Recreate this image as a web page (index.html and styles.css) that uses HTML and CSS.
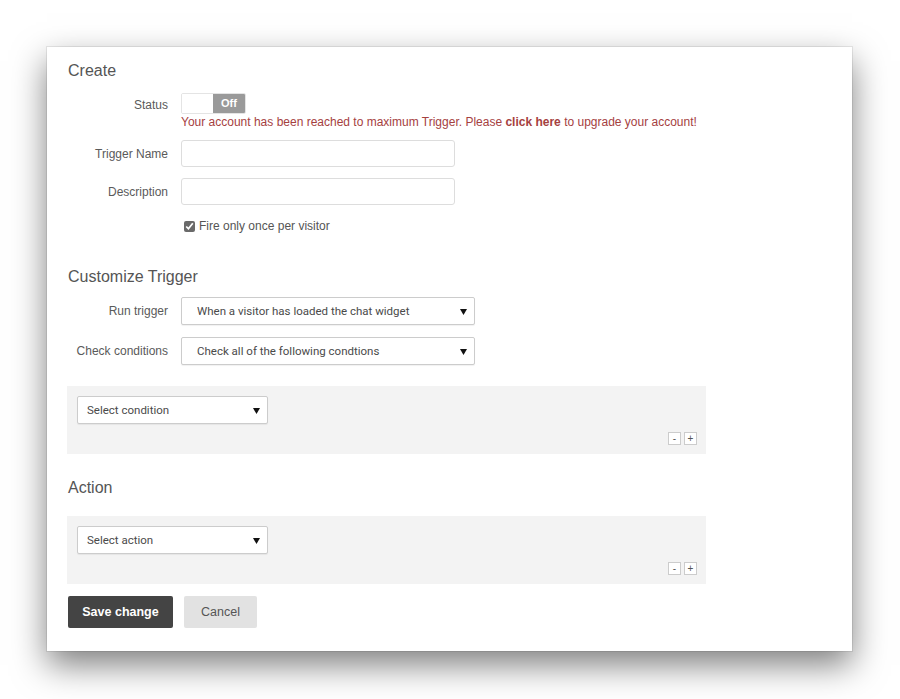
FILE: index.html
```html
<!DOCTYPE html>
<html lang="en">
<head>
    <meta charset="UTF-8">
    <title>Create Trigger</title>
    <link rel="stylesheet" href="styles.css">
</head>
<body>
    <div class="card">
        <h2>Create</h2>

        <div class="row row-status">
            <label class="label">Status</label>
            <div class="field">
                <div class="toggle">
                    <span class="toggle-on"></span>
                    <span class="toggle-off">Off</span>
                </div>
                <p class="error">Your account has been reached to maximum Trigger. Please <a href="#">click here</a> to upgrade your account!</p>
            </div>
        </div>

        <div class="row row-first">
            <label class="label" for="trigger-name">Trigger Name</label>
            <input type="text" id="trigger-name" class="input">
        </div>

        <div class="row">
            <label class="label" for="trigger-desc">Description</label>
            <input type="text" id="trigger-desc" class="input">
        </div>

        <div class="row row-check">
            <span class="label"></span>
            <label class="check"><input type="checkbox" checked> Fire only once per visitor</label>
        </div>

        <h2 class="section">Customize Trigger</h2>

        <div class="row">
            <label class="label">Run trigger</label>
            <select class="select select-wide">
                <option>When a visitor has loaded the chat widget</option>
            </select>
        </div>

        <div class="row row-select">
            <label class="label">Check conditions</label>
            <select class="select select-wide">
                <option>Check all of the following condtions</option>
            </select>
        </div>

        <div class="rule-box">
            <select class="select select-small">
                <option>Select condition</option>
            </select>
            <div class="rule-tools">
                <button class="mini">-</button>
                <button class="mini">+</button>
            </div>
        </div>

        <h2 class="section section-action">Action</h2>

        <div class="rule-box">
            <select class="select select-small">
                <option>Select action</option>
            </select>
            <div class="rule-tools">
                <button class="mini">-</button>
                <button class="mini">+</button>
            </div>
        </div>

        <div class="actions">
            <button class="btn btn-dark">Save change</button>
            <button class="btn btn-light">Cancel</button>
        </div>
    </div>
</body>
</html>
```

FILE: styles.css
```css
body {
    font-family: "Liberation Sans", Arial, sans-serif;
    background-color: #fff;
    margin: 0;
    padding: 47px 0 48px;
    color: #555;
}

.card {
    width: 805px;
    margin: 0 0 0 47px;
    padding: 14px 20px 23px;
    box-sizing: border-box;
    background-color: #fff;
    box-shadow: 0 0 0 1px rgba(0, 0, 0, 0.08), 0 14px 32px rgba(0, 0, 0, 0.5);
}

h2 {
    font-size: 16px;
    font-weight: normal;
    line-height: 20px;
    margin: 0 0 0 1px;
    color: #555;
}

.section {
    margin-top: 34px;
}

.row {
    display: flex;
    align-items: center;
    margin-top: 11px;
    font-size: 12px;
}

.row-status {
    align-items: flex-start;
    margin-top: 12px;
}

.row-status .label {
    line-height: 24px;
}

.row-first {
    margin-top: 10px;
}

.label {
    width: 101px;
    flex: none;
    text-align: right;
    margin-right: 13px;
    color: #5a5a5a;
}

.field {
    display: flex;
    flex-direction: column;
}

.toggle {
    display: flex;
    width: 65px;
    height: 21px;
    border-radius: 2px;
    overflow: hidden;
    border: 1px solid #e4e4e4;
    box-sizing: border-box;
}

.toggle-on {
    width: 31px;
    background-color: #fff;
}

.toggle-off {
    flex: 1;
    background-color: #9a9a9a;
    color: #fff;
    font-weight: bold;
    font-size: 11px;
    line-height: 19px;
    text-align: center;
}

.error {
    margin: 0;
    color: #a5413f;
    font-size: 12px;
    line-height: 16px;
}

.error a {
    color: #a5413f;
    font-weight: bold;
    text-decoration: none;
}

.input {
    width: 274px;
    height: 27px;
    box-sizing: border-box;
    border: 1px solid #ddd;
    border-radius: 3px;
    padding: 0 8px;
    margin: 0;
}

.row-check {
    margin-top: 14px;
}

.check {
    display: flex;
    align-items: center;
    color: #555;
    margin-left: 3px;
}

.check input {
    width: 11px;
    height: 11px;
    margin: 0 4px 0 0;
    accent-color: #6a6a6a;
}

.section + .row {
    margin-top: 10px;
}

.row-select {
    margin-top: 12px;
}

.select {
    appearance: none;
    height: 28px;
    box-sizing: border-box;
    border: 1px solid #ccc;
    border-radius: 2px;
    background: #fff url("data:image/svg+xml;utf8,<svg xmlns='http://www.w3.org/2000/svg' width='7' height='7'><path d='M0 1h7L3.5 7z' fill='%23111'/></svg>") no-repeat right 7px center;
    font-family: "Roboto", "Open Sans", sans-serif;
    font-size: 11.5px;
    color: #4a4a4a;
    padding: 0 24px 0 15px;
    margin: 0;
    box-shadow: 0 1px 1px rgba(0, 0, 0, 0.06);
}

.select-wide {
    width: 294px;
}

.select-small {
    width: 191px;
    padding-left: 9px;
}

.rule-box {
    margin-top: 21px;
    width: 639px;
    height: 68px;
    box-sizing: border-box;
    padding: 10px 9px 9px 10px;
    background-color: #f3f3f3;
    display: flex;
    flex-direction: column;
}

.rule-tools {
    display: flex;
    justify-content: flex-end;
    gap: 3px;
    margin-top: 8px;
}

.mini {
    width: 13px;
    height: 13px;
    padding: 0;
    border: 1px solid #ccc;
    background-color: #fff;
    font-family: "Liberation Sans", Arial, sans-serif;
    font-size: 10px;
    line-height: 11px;
    color: #555;
}

.section-action {
    margin-top: 24px;
}

.section-action + .rule-box {
    margin-top: 18px;
}

.actions {
    display: flex;
    gap: 11px;
    margin-top: 12px;
}

.btn {
    height: 32px;
    border: none;
    border-radius: 2px;
    font-family: "Liberation Sans", Arial, sans-serif;
    font-size: 12.5px;
    cursor: pointer;
}

.btn-dark {
    width: 105px;
    margin-left: 1px;
    background-color: #444;
    color: #fff;
    font-weight: bold;
}

.btn-light {
    width: 73px;
    background-color: #e2e2e2;
    color: #555;
}
```
